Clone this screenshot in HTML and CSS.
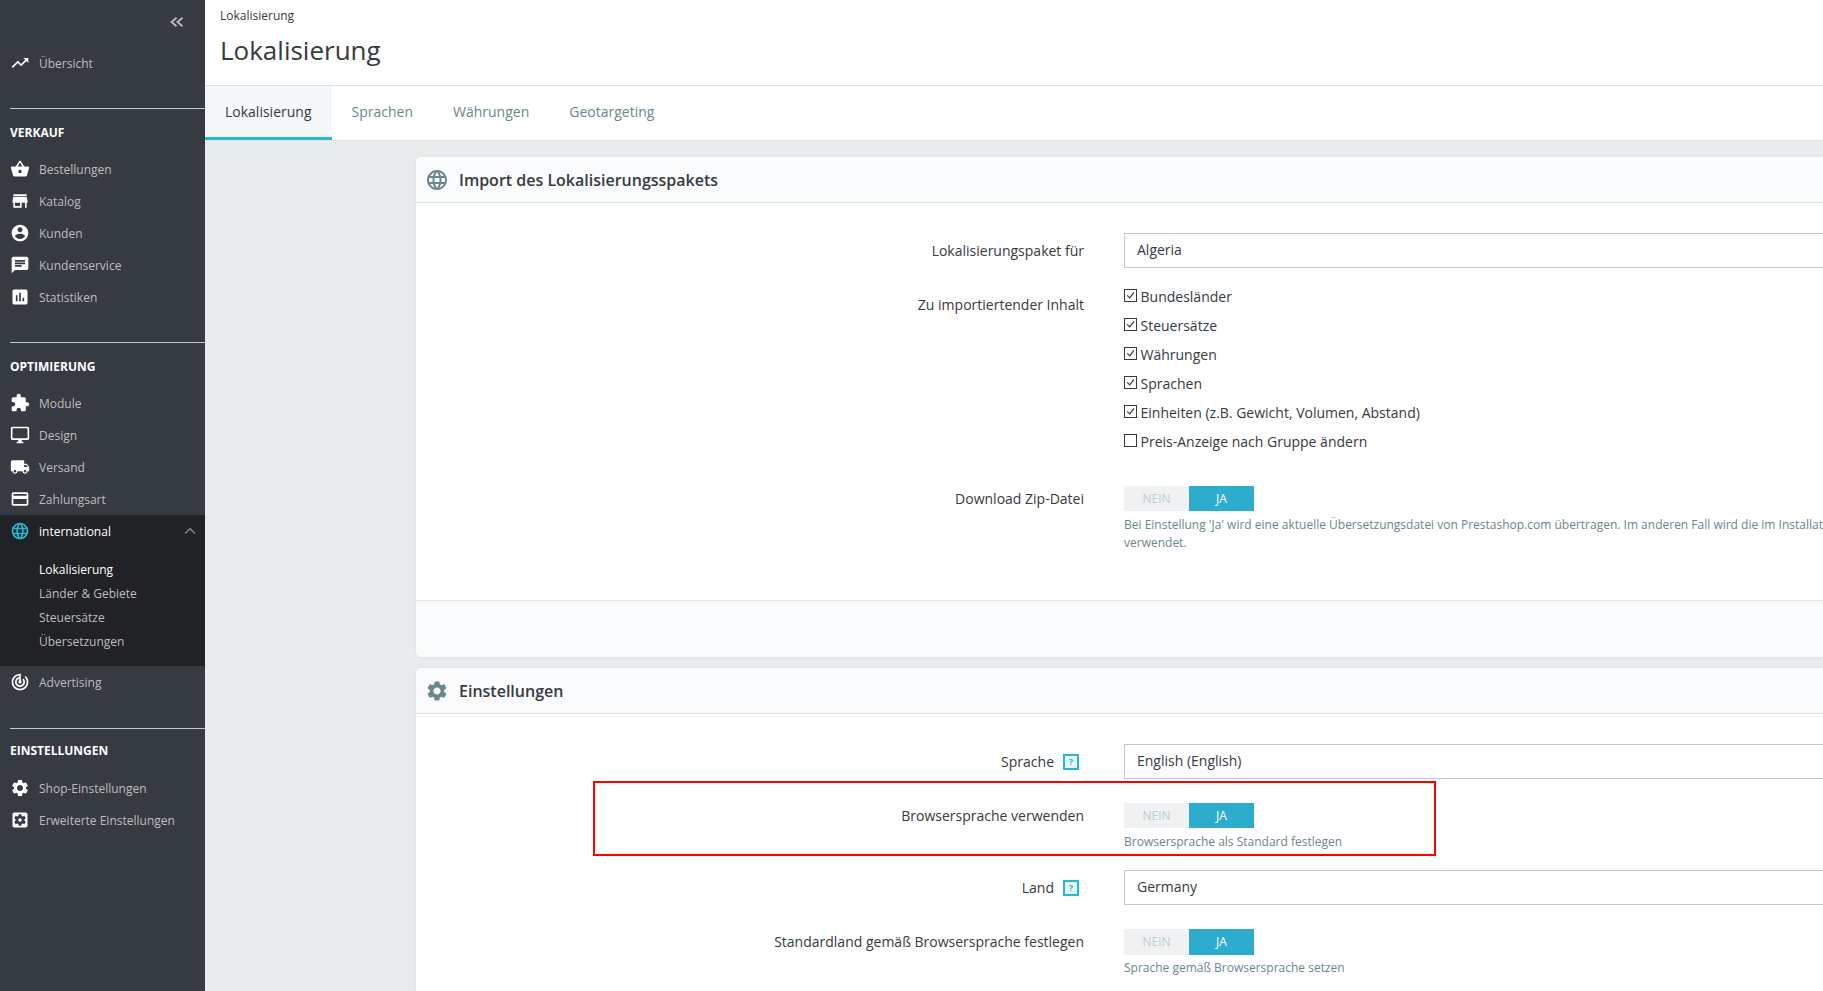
FILE: index.html
```html
<!DOCTYPE html>
<html lang="de">
<head>
<meta charset="utf-8">
<title>Lokalisierung</title>
<link rel="stylesheet" href="styles.css">
</head>
<body>
<svg class="sprite" xmlns="http://www.w3.org/2000/svg">
  <symbol id="i-trend" viewBox="0 0 24 24"><path d="M16 6l2.29 2.29-4.88 4.88-4-4L2 16.59 3.41 18l6-6 4 4 6.3-6.29L22 12V6z"/></symbol>
  <symbol id="i-basket" viewBox="0 0 24 24"><path d="M17.21 9l-4.38-6.56c-.19-.28-.51-.42-.83-.42-.32 0-.64.14-.83.43L6.79 9H2c-.55 0-1 .45-1 1 0 .09.01.18.04.27l2.54 9.27c.23.84 1 1.46 1.92 1.46h13c.92 0 1.69-.62 1.93-1.46l2.54-9.27L23 10c0-.55-.45-1-1-1h-4.79zM9 9l3-4.4L15 9H9zm3 8c-1.1 0-2-.9-2-2s.9-2 2-2 2 .9 2 2-.9 2-2 2z"/></symbol>
  <symbol id="i-store" viewBox="0 0 24 24"><path d="M20 4H4v2h16V4zm1 10v-2l-1-5H4l-1 5v2h1v6h10v-6h4v6h2v-6h1zm-9 4H6v-4h6v4z"/></symbol>
  <symbol id="i-account" viewBox="0 0 24 24"><path d="M12 2C6.48 2 2 6.48 2 12s4.48 10 10 10 10-4.48 10-10S17.52 2 12 2zm0 3c1.66 0 3 1.34 3 3s-1.34 3-3 3-3-1.34-3-3 1.34-3 3-3zm0 14.2c-2.5 0-4.71-1.28-6-3.22.03-1.99 4-3.08 6-3.08 1.99 0 5.97 1.09 6 3.08-1.29 1.94-3.5 3.22-6 3.22z"/></symbol>
  <symbol id="i-chat" viewBox="0 0 24 24"><path d="M20 2H4c-1.1 0-1.99.9-1.99 2L2 22l4-4h14c1.1 0 2-.9 2-2V4c0-1.1-.9-2-2-2zM6 9h12v2H6V9zm8 5H6v-2h8v2zm4-6H6V6h12v2z"/></symbol>
  <symbol id="i-stats" viewBox="0 0 24 24"><path d="M19 3H5c-1.1 0-2 .9-2 2v14c0 1.1.9 2 2 2h14c1.1 0 2-.9 2-2V5c0-1.1-.9-2-2-2zM9 17H7v-7h2v7zm4 0h-2V7h2v10zm4 0h-2v-4h2v4z"/></symbol>
  <symbol id="i-puzzle" viewBox="0 0 24 24"><path d="M20.5 11H19V7c0-1.1-.9-2-2-2h-4V3.5C13 2.12 11.88 1 10.5 1S8 2.12 8 3.5V5H4c-1.1 0-1.99.9-1.99 2v3.8H3.5c1.49 0 2.7 1.21 2.7 2.7s-1.21 2.7-2.7 2.7H2V20c0 1.1.9 2 2 2h3.8v-1.5c0-1.49 1.21-2.7 2.7-2.7 1.49 0 2.7 1.21 2.7 2.7V22H17c1.1 0 2-.9 2-2v-4h1.5c1.38 0 2.5-1.12 2.5-2.5S21.88 11 20.5 11z"/></symbol>
  <symbol id="i-desktop" viewBox="0 0 24 24"><path d="M21 2H3c-1.1 0-2 .9-2 2v12c0 1.1.9 2 2 2h7v2H8v2h8v-2h-2v-2h7c1.1 0 2-.9 2-2V4c0-1.1-.9-2-2-2zm0 14H3V4h18v12z"/></symbol>
  <symbol id="i-truck" viewBox="0 0 24 24"><path d="M20 8h-3V4H3c-1.1 0-2 .9-2 2v11h2c0 1.66 1.34 3 3 3s3-1.34 3-3h6c0 1.66 1.34 3 3 3s3-1.34 3-3h2v-5l-3-4zM6 18.5c-.83 0-1.5-.67-1.5-1.5s.67-1.5 1.5-1.5 1.5.67 1.5 1.5-.67 1.5-1.5 1.5zm13.5-9l1.96 2.5H17V9.5h2.5zm-1.5 9c-.83 0-1.5-.67-1.5-1.5s.67-1.5 1.5-1.5 1.5.67 1.5 1.5-.67 1.5-1.5 1.5z"/></symbol>
  <symbol id="i-card" viewBox="0 0 24 24"><path d="M20 4H4c-1.11 0-1.99.89-1.99 2L2 18c0 1.11.89 2 2 2h16c1.11 0 2-.89 2-2V6c0-1.11-.89-2-2-2zm0 14H4v-6h16v6zm0-10H4V6h16v2z"/></symbol>
  <symbol id="i-globe" viewBox="0 0 24 24"><path d="M11.99 2C6.47 2 2 6.48 2 12s4.47 10 9.99 10C17.52 22 22 17.52 22 12S17.52 2 11.99 2zm6.93 6h-2.95c-.32-1.25-.78-2.45-1.38-3.56 1.84.63 3.37 1.91 4.33 3.56zM12 4.04c.83 1.2 1.48 2.53 1.91 3.96h-3.82c.43-1.43 1.08-2.76 1.91-3.96zM4.26 14C4.1 13.36 4 12.69 4 12s.1-1.36.26-2h3.38c-.08.66-.14 1.32-.14 2 0 .68.06 1.34.14 2H4.26zm.82 2h2.95c.32 1.25.78 2.45 1.38 3.56-1.84-.63-3.37-1.9-4.33-3.56zm2.95-8H5.08c.96-1.66 2.49-2.93 4.33-3.56C8.81 5.55 8.35 6.75 8.03 8zM12 19.96c-.83-1.2-1.48-2.53-1.91-3.96h3.82c-.43 1.43-1.08 2.76-1.91 3.96zM14.34 14H9.66c-.09-.66-.16-1.32-.16-2 0-.68.07-1.35.16-2h4.68c.09.65.16 1.32.16 2 0 .68-.07 1.34-.16 2zm.25 5.56c.6-1.11 1.06-2.31 1.38-3.56h2.95c-.96 1.65-2.49 2.93-4.33 3.56zM16.36 14c.08-.66.14-1.32.14-2 0-.68-.06-1.34-.14-2h3.38c.16.64.26 1.31.26 2s-.1 1.36-.26 2h-3.38z"/></symbol>
  <symbol id="i-target" viewBox="0 0 24 24"><path d="M19.07 4.93l-1.41 1.41C19.1 7.79 20 9.79 20 12c0 4.42-3.58 8-8 8s-8-3.58-8-8c0-4.08 3.05-7.44 7-7.93v2.02C8.16 6.57 6 9.03 6 12c0 3.31 2.69 6 6 6s6-2.69 6-6c0-1.66-.67-3.16-1.76-4.24l-1.41 1.41C15.55 9.9 16 10.9 16 12c0 2.21-1.79 4-4 4s-4-1.79-4-4c0-1.86 1.28-3.41 3-3.86v2.14c-.6.35-1 .98-1 1.72 0 1.1.9 2 2 2s2-.9 2-2c0-.74-.4-1.38-1-1.72V2h-1C6.48 2 2 6.48 2 12s4.48 10 10 10 10-4.48 10-10c0-2.76-1.12-5.26-2.93-7.07z"/></symbol>
  <symbol id="i-gear" viewBox="0 0 24 24"><path d="M19.14 12.94c.04-.3.06-.61.06-.94 0-.32-.02-.64-.07-.94l2.03-1.58c.18-.14.23-.41.12-.61l-1.92-3.32c-.12-.22-.37-.29-.59-.22l-2.39.96c-.5-.38-1.03-.7-1.62-.94l-.36-2.54c-.04-.24-.24-.41-.48-.41h-3.84c-.24 0-.43.17-.47.41l-.36 2.54c-.59.24-1.13.57-1.62.94l-2.39-.96c-.22-.08-.47 0-.59.22L2.74 8.87c-.12.21-.08.47.12.61l2.03 1.58c-.05.3-.09.63-.09.94s.02.64.07.94l-2.03 1.58c-.18.14-.23.41-.12.61l1.92 3.32c.12.22.37.29.59.22l2.39-.96c.5.38 1.03.7 1.62.94l.36 2.54c.05.24.24.41.48.41h3.84c.24 0 .44-.17.47-.41l.36-2.54c.59-.24 1.13-.56 1.62-.94l2.39.96c.22.08.47 0 .59-.22l1.92-3.32c.12-.22.07-.47-.12-.61l-2.01-1.58zM12 15.6c-1.98 0-3.6-1.62-3.6-3.6s1.62-3.6 3.6-3.6 3.6 1.62 3.6 3.6-1.62 3.6-3.6 3.6z"/></symbol>
  <symbol id="i-gearbox" viewBox="0 0 24 24"><path d="M12 10c-1.1 0-2 .9-2 2s.9 2 2 2 2-.9 2-2-.9-2-2-2zm7-7H5c-1.11 0-2 .9-2 2v14c0 1.1.89 2 2 2h14c1.11 0 2-.9 2-2V5c0-1.1-.89-2-2-2zm-1.75 9c0 .23-.02.46-.05.68l1.48 1.16c.13.11.17.3.08.45l-1.4 2.42c-.09.15-.27.21-.43.15l-1.74-.7c-.36.28-.76.51-1.18.69l-.26 1.85c-.03.17-.18.3-.35.3h-2.8c-.17 0-.32-.13-.35-.29l-.26-1.85c-.43-.18-.82-.41-1.18-.69l-1.74.7c-.16.06-.34 0-.43-.15l-1.4-2.42c-.09-.15-.05-.34.08-.45l1.48-1.16c-.03-.23-.05-.46-.05-.69 0-.23.02-.46.05-.68l-1.48-1.16c-.13-.11-.17-.3-.08-.45l1.4-2.42c.09-.15.27-.21.43-.15l1.74.7c.36-.28.76-.51 1.18-.69l.26-1.85c.03-.17.18-.3.35-.3h2.8c.17 0 .32.13.35.29l.26 1.85c.43.18.82.41 1.18.69l1.74-.7c.16-.06.34 0 .43.15l1.4 2.42c.09.15.05.34-.08.45l-1.48 1.16c.03.23.05.46.05.69z"/></symbol>
  <symbol id="i-tick" viewBox="0 0 13 13"><path d="M2.6 6.4l3 3 5-6.6" fill="none" stroke="#363a41" stroke-width="1.4"/></symbol>
</svg>

<div class="app">
  <nav class="sidebar">
    <div class="collapse">
      <svg class="collapse-icon" viewBox="0 0 14 10"><path d="M6.5 0.7L1.5 5l5 4.3M12.5 0.7L7.5 5l5 4.3"/></svg>
    </div>
    <a class="nav-item"><svg class="nav-icon"><use href="#i-trend"/></svg><span>Übersicht</span></a>

    <hr class="nav-rule">
    <div class="nav-heading">VERKAUF</div>
    <a class="nav-item"><svg class="nav-icon"><use href="#i-basket"/></svg><span>Bestellungen</span></a>
    <a class="nav-item"><svg class="nav-icon"><use href="#i-store"/></svg><span>Katalog</span></a>
    <a class="nav-item"><svg class="nav-icon"><use href="#i-account"/></svg><span>Kunden</span></a>
    <a class="nav-item"><svg class="nav-icon"><use href="#i-chat"/></svg><span>Kundenservice</span></a>
    <a class="nav-item"><svg class="nav-icon"><use href="#i-stats"/></svg><span>Statistiken</span></a>

    <hr class="nav-rule">
    <div class="nav-heading">OPTIMIERUNG</div>
    <a class="nav-item"><svg class="nav-icon"><use href="#i-puzzle"/></svg><span>Module</span></a>
    <a class="nav-item"><svg class="nav-icon"><use href="#i-desktop"/></svg><span>Design</span></a>
    <a class="nav-item"><svg class="nav-icon"><use href="#i-truck"/></svg><span>Versand</span></a>
    <a class="nav-item"><svg class="nav-icon"><use href="#i-card"/></svg><span>Zahlungsart</span></a>
    <div class="nav-group">
      <a class="nav-item nav-item-active"><svg class="nav-icon nav-icon-active"><use href="#i-globe"/></svg><span>international</span>
        <svg class="nav-caret" viewBox="0 0 12 8"><path d="M1 6.5L6 1.6l5 4.9"/></svg></a>
      <ul class="subnav">
        <li class="subnav-current">Lokalisierung</li>
        <li>Länder &amp; Gebiete</li>
        <li>Steuersätze</li>
        <li>Übersetzungen</li>
      </ul>
    </div>
    <a class="nav-item"><svg class="nav-icon"><use href="#i-target"/></svg><span>Advertising</span></a>

    <hr class="nav-rule nav-rule-wide">
    <div class="nav-heading nav-heading-tight">EINSTELLUNGEN</div>
    <a class="nav-item"><svg class="nav-icon"><use href="#i-gear"/></svg><span>Shop-Einstellungen</span></a>
    <a class="nav-item"><svg class="nav-icon"><use href="#i-gearbox"/></svg><span>Erweiterte Einstellungen</span></a>
  </nav>

  <div class="main">
    <header class="page-head">
      <div class="breadcrumb">Lokalisierung</div>
      <h1 class="page-title">Lokalisierung</h1>
    </header>
    <div class="tabs">
      <a class="tab tab-active">Lokalisierung</a>
      <a class="tab">Sprachen</a>
      <a class="tab">Währungen</a>
      <a class="tab">Geotargeting</a>
    </div>

    <div class="content">
      <section class="panel">
        <h2 class="panel-head"><svg class="panel-icon"><use href="#i-globe"/></svg>Import des Lokalisierungsspakets</h2>
        <div class="panel-body">
          <div class="row row-gap-s">
            <div class="row-label">Lokalisierungspaket für</div>
            <div class="row-control"><div class="select">Algeria</div></div>
          </div>
          <div class="row row-gap-l">
            <div class="row-label row-label-list">Zu importiertender Inhalt</div>
            <div class="row-control">
              <div class="check"><span class="box"><svg class="tick"><use href="#i-tick"/></svg></span>Bundesländer</div>
              <div class="check"><span class="box"><svg class="tick"><use href="#i-tick"/></svg></span>Steuersätze</div>
              <div class="check"><span class="box"><svg class="tick"><use href="#i-tick"/></svg></span>Währungen</div>
              <div class="check"><span class="box"><svg class="tick"><use href="#i-tick"/></svg></span>Sprachen</div>
              <div class="check"><span class="box"><svg class="tick"><use href="#i-tick"/></svg></span>Einheiten (z.B. Gewicht, Volumen, Abstand)</div>
              <div class="check"><span class="box"></span>Preis-Anzeige nach Gruppe ändern</div>
            </div>
          </div>
          <div class="row">
            <div class="row-label row-label-toggle">Download Zip-Datei</div>
            <div class="row-control">
              <div class="toggle"><span class="toggle-off">NEIN</span><span class="toggle-on">JA</span></div>
              <p class="help">Bei Einstellung 'Ja' wird eine aktuelle Übersetzungsdatei von Prestashop.com übertragen. Im anderen Fall wird die im Installationspaket enthaltene Datei<br>verwendet.</p>
            </div>
          </div>
        </div>
        <div class="panel-foot"></div>
      </section>

      <section class="panel">
        <h2 class="panel-head"><svg class="panel-icon"><use href="#i-gear"/></svg>Einstellungen</h2>
        <div class="panel-body">
          <div class="row row-gap-m">
            <div class="row-label">Sprache<span class="hint">?</span></div>
            <div class="row-control"><div class="select">English (English)</div></div>
          </div>
          <div class="row row-gap-h">
            <div class="highlight"></div>
            <div class="row-label row-label-toggle">Browsersprache verwenden</div>
            <div class="row-control">
              <div class="toggle"><span class="toggle-off">NEIN</span><span class="toggle-on">JA</span></div>
              <p class="help">Browsersprache als Standard festlegen</p>
            </div>
          </div>
          <div class="row row-gap-m">
            <div class="row-label">Land<span class="hint">?</span></div>
            <div class="row-control"><div class="select">Germany</div></div>
          </div>
          <div class="row">
            <div class="row-label row-label-toggle">Standardland gemäß Browsersprache festlegen</div>
            <div class="row-control">
              <div class="toggle toggle-tall"><span class="toggle-off">NEIN</span><span class="toggle-on">JA</span></div>
              <p class="help">Sprache gemäß Browsersprache setzen</p>
            </div>
          </div>
        </div>
      </section>
    </div>
  </div>
</div>
</body>
</html>
```
FILE: styles.css
```css
* { box-sizing: border-box; }

html, body {
  margin: 0;
  height: 100%;
  overflow: hidden;
}

body {
  font-family: "Open Sans", "Noto Sans", sans-serif;
  font-size: 14px;
  color: #363a41;
  background: #eaebec;
}

.sprite { display: none; }

.app {
  display: flex;
  height: 991px;
}

/* Sidebar */
.sidebar {
  flex: 0 0 205px;
  background: #363a41;
  color: #bebebe;
  font-size: 12px;
}

.collapse {
  height: 47px;
  display: flex;
  justify-content: flex-end;
  padding: 17px 21px 0 0;
}

.collapse-icon {
  width: 14px;
  height: 10px;
  fill: none;
  stroke: #bebebe;
  stroke-width: 1.8;
}

.nav-item {
  height: 32px;
  display: flex;
  align-items: center;
  padding-left: 10px;
  gap: 9px;
}

.nav-icon {
  flex: none;
  width: 20px;
  height: 20px;
  fill: #fff;
}

.nav-rule {
  margin: 29px 0 0 10px;
  border: 0;
  border-top: 1px solid #bbcdd2;
}

.nav-rule-wide { margin-top: 30px; }

.nav-heading {
  height: 44px;
  display: flex;
  align-items: center;
  padding: 3px 0 0 10px;
  color: #fff;
  font-size: 12px;
  font-weight: 700;
}

.nav-heading-tight {
  height: 43px;
  padding-top: 0;
}

.nav-group {
  background: #202226;
  height: 151px;
}

.nav-item-active { color: #fff; }

.nav-icon-active { fill: #25b9d7; }

.nav-caret {
  width: 12px;
  height: 8px;
  margin-left: auto;
  margin-right: 9px;
  fill: none;
  stroke: #6c868e;
  stroke-width: 1.6;
}

.subnav {
  list-style: none;
  margin: 0;
  padding: 11px 0 0 39px;
}

.subnav li {
  height: 24px;
  line-height: 24px;
}

.subnav .subnav-current { color: #fff; }

/* Main */
.main {
  flex: 1;
  min-width: 0;
  display: flex;
  flex-direction: column;
  overflow: hidden;
}

.page-head {
  height: 86px;
  flex: none;
  padding-left: 15px;
  background: #fff;
  border-bottom: 1px solid #dfe3e6;
}

.breadcrumb {
  padding-top: 7px;
  font-size: 12px;
  line-height: 18px;
}

.page-title {
  margin: 7px 0 0;
  font-size: 26px;
  font-weight: 400;
  line-height: 36px;
}

.tabs {
  flex: none;
  height: 54px;
  display: flex;
  background: #fff;
}

.tab {
  padding: 0 20px;
  line-height: 51px;
  color: #6c868e;
}

.tab-active {
  color: #363a41;
  background: #f4f8fb;
  border-bottom: 3px solid #25b9d7;
}

.content {
  flex: 1;
  min-height: 0;
  padding: 16px 0 0 211px;
  border-top: 1px solid #dfe1e3;
}

.panel {
  width: 1800px;
  margin-bottom: 11px;
  background: #fff;
  border-radius: 5px;
  box-shadow: 0 0 4px rgba(0, 0, 0, 0.06);
}

.panel-head {
  display: flex;
  align-items: center;
  gap: 10px;
  height: 46px;
  margin: 0;
  padding-left: 9px;
  background: #fafbfc;
  border-bottom: 1px solid #dbe6e9;
  border-radius: 5px 5px 0 0;
  font-size: 16px;
  font-weight: 600;
}

.panel-icon {
  width: 24px;
  height: 24px;
  fill: #6c868e;
}

.panel-body {
  padding-top: 30px;
  padding-bottom: 48px;
}

.panel-foot {
  height: 57px;
  background: #fafbfc;
  border-top: 1px solid #dbe6e9;
  border-radius: 0 0 5px 5px;
}

.row {
  position: relative;
  display: flex;
  gap: 40px;
}

.row-gap-s { margin-bottom: 14px; }
.row-gap-m { margin-bottom: 24px; }
.row-gap-h { margin-bottom: 19px; }
.row-gap-l { margin-bottom: 30px; }

.row-label {
  flex: 0 0 668px;
  display: flex;
  justify-content: flex-end;
  align-items: center;
  height: 35px;
}

.row-label-list { height: 44px; }
.row-label-toggle { height: 25px; }

.row-control {
  flex: 1;
  min-width: 0;
}

.select {
  height: 35px;
  padding-left: 12px;
  line-height: 32px;
  border: 1px solid #bbcdd2;
}

.check {
  height: 29px;
  display: flex;
  align-items: center;
  gap: 3.5px;
}

.box {
  flex: none;
  width: 13px;
  height: 13px;
  margin-top: -2px;
  border: 1px solid #363a41;
  background: #fff;
  position: relative;
}

.tick {
  display: block;
  width: 11px;
  height: 11px;
}

.toggle {
  display: flex;
  width: 130px;
  height: 25px;
  font-size: 12px;
  line-height: 25px;
  text-align: center;
}

.toggle-tall {
  height: 26px;
  margin-bottom: -1px;
  line-height: 26px;
}

.toggle-off {
  flex: 1;
  background: #eff1f2;
  color: #bbcdd2;
}

.toggle-on {
  flex: 1;
  background: #2eacce;
  color: #fff;
}

.help {
  margin: 5px 0 0;
  font-size: 12px;
  line-height: 18px;
  color: #6c868e;
  white-space: nowrap;
}

.hint {
  width: 16px;
  height: 16px;
  margin-left: 9px;
  margin-right: 5px;
  border: 2px solid #25b9d7;
  background: #e6f7fa;
  color: #25b9d7;
  font-size: 9px;
  font-weight: 700;
  line-height: 12px;
  text-align: center;
}

.highlight {
  position: absolute;
  top: -22px;
  left: 177px;
  width: 843px;
  height: 75px;
  border: 2px solid #f00;
}
```
